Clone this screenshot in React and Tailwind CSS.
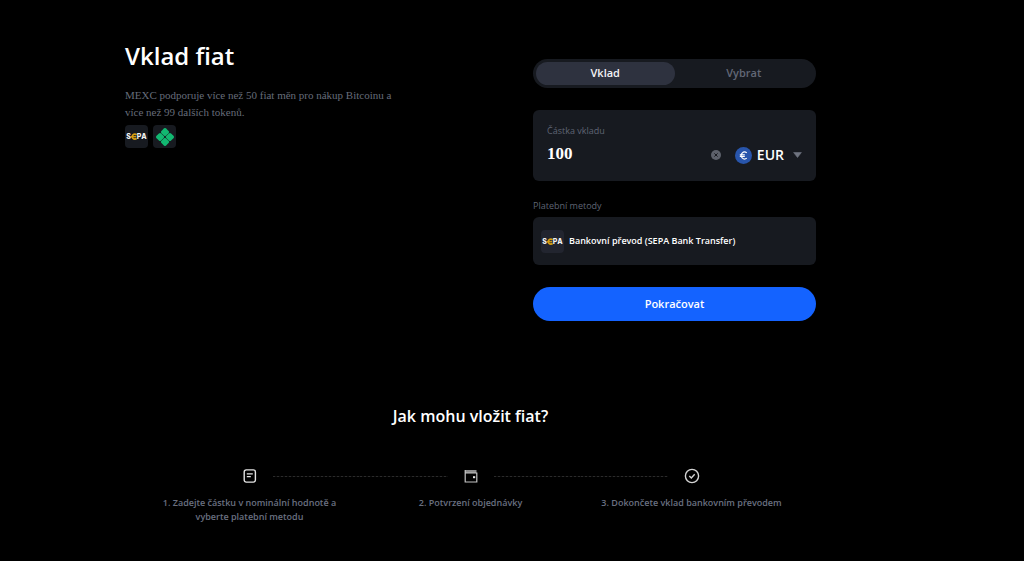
import { useState } from 'react'

const steps = [
  { icon: ListIcon, text: '1. Zadejte částku v nominální hodnotě a vyberte platební metodu' },
  { icon: WalletIcon, text: '2. Potvrzení objednávky' },
  { icon: CheckIcon, text: '3. Dokončete vklad bankovním převodem' },
]

function ListIcon() {
  return (
    <svg width="14" height="16" viewBox="0 0 14 16" fill="none" stroke="#e4e4e4" strokeWidth="1.4">
      <rect x="1.2" y="1.9" width="11.2" height="12.2" rx="2" />
      <path d="M3.8 5.9h6M3.8 8.6h4" />
    </svg>
  )
}

function WalletIcon() {
  return (
    <svg width="14" height="16" viewBox="0 0 14 16" fill="none">
      <path d="M1 2h11.5v3H1z" fill="#8b8b8b" />
      <path d="M1.2 2v12h11.6V5H1.2" stroke="#c4c4c4" strokeWidth="1.2" />
      <path d="M9 8.2h2.2v2H9z" fill="#e4e4e4" />
    </svg>
  )
}

function CheckIcon() {
  return (
    <svg width="16" height="16" viewBox="0 0 16 16" fill="none" stroke="#d4d4d4" strokeWidth="1.4">
      <circle cx="8" cy="8" r="6.6" />
      <path d="M5.3 8l2 2 3.4-3.8" />
    </svg>
  )
}

function SepaLogo({ className }) {
  return (
    <span className={`flex size-[23px] shrink-0 items-center justify-center rounded ${className}`}>
      <svg width="21" height="9" viewBox="0 0 21 9" role="img" aria-label="SEPA">
        <g fontFamily="Inter, sans-serif" fontWeight="800" fontSize="7" fill="#f1f1f1">
          <text x="0.3" y="7.2">S</text>
          <text x="10.8" y="7.2">P</text>
          <text x="15.2" y="7.2">A</text>
        </g>
        <path d="M10.6 2.9A2.5 2.5 0 1 0 10.6 6.4" fill="none" stroke="#d9a010" strokeWidth="1.7" />
        <path d="M5 4.7h5.2" stroke="#d9a010" strokeWidth="1.3" />
      </svg>
    </span>
  )
}

function PixLogo() {
  return (
    <span className="flex size-[23px] shrink-0 items-center justify-center rounded bg-[#171a20]">
      <svg width="18" height="18" viewBox="0 0 18 18">
        <g fill="#12b871" transform="rotate(45 9 9)">
          <rect x="2.2" y="2.2" width="6.6" height="6.6" rx="1.6" />
          <rect x="9.2" y="2.2" width="6.6" height="6.6" rx="1.6" />
          <rect x="2.2" y="9.2" width="6.6" height="6.6" rx="1.6" />
          <rect x="9.2" y="9.2" width="6.6" height="6.6" rx="1.6" />
        </g>
      </svg>
    </span>
  )
}

function Dashes({ visible }) {
  return (
    <span
      className={`h-px flex-1 ${visible ? 'bg-[repeating-linear-gradient(90deg,#2b2b2b_0_2px,#0c0c0c_2px_4px)]' : ''}`}
    />
  )
}

export default function App() {
  const [tab, setTab] = useState('vklad')
  const [amount, setAmount] = useState('100')

  const tabClass = (name) =>
    `h-[23px] flex-1 rounded-full text-[11px] font-semibold ${tab === name ? 'bg-[#2e323f] text-[#f3f4f6]' : 'text-[#626776]'}`

  return (
    <main className="min-h-screen bg-black pr-[208px] pl-[125px] font-['Open_Sans','Noto_Sans',sans-serif] text-white">
      <div className="flex items-start justify-between">
        <section className="w-[283px] pt-[38px]">
          <h1 className="text-2xl leading-9 font-semibold">Vklad fiat</h1>
          <p className="mt-[13px] font-['Liberation_Serif',serif] text-[11px] leading-[17px] text-[#666c7a]">
            MEXC podporuje více než 50 fiat měn pro nákup Bitcoinu a více než 99 dalších tokenů.
          </p>
          <div className="mt-1 flex gap-[5px]">
            <SepaLogo className="bg-[#171a20]" />
            <PixLogo />
          </div>
        </section>

        <form className="w-[283px] pt-[59px]" onSubmit={(e) => e.preventDefault()}>
          <div className="flex items-center rounded-full bg-[#171a20] p-[3px]">
            <button type="button" className={tabClass('vklad')} onClick={() => setTab('vklad')}>
              Vklad
            </button>
            <button type="button" className={tabClass('vybrat')} onClick={() => setTab('vybrat')}>
              Vybrat
            </button>
          </div>

          <div className="mt-[22px] rounded-md bg-[#171a20] px-[14px] pt-[13px] pb-3">
            <label htmlFor="amount" className="block text-[9px] leading-4 text-[#5f6473]">
              Částka vkladu
            </label>
            <div className="mt-[2px] flex items-center">
              <input
                id="amount"
                value={amount}
                onChange={(e) => setAmount(e.target.value)}
                className="h-7 w-0 flex-1 bg-transparent pb-[3px] font-['Liberation_Serif',serif] text-[17px] font-bold outline-none"
              />
              <button type="button" aria-label="Vymazat" onClick={() => setAmount('')}>
                <svg width="10" height="10" viewBox="0 0 10 10">
                  <circle cx="5" cy="5" r="5" fill="#5d616b" />
                  <path d="M3.4 3.4l3.2 3.2M6.6 3.4L3.4 6.6" stroke="#181a20" strokeWidth="1" />
                </svg>
              </button>
              <button type="button" className="ml-[14px] flex items-center">
                <svg width="17" height="17" viewBox="0 0 17 17" fill="none">
                  <circle cx="8.5" cy="8.5" r="8.5" fill="#2855ab" />
                  <path d="M11.8 5.9A3.4 3.4 0 1 0 11.8 11.1M4.8 7.7h5M4.8 9.4h5" stroke="#fff" strokeWidth="1.1" />
                </svg>
                <span className="ml-[5px] text-sm leading-5 font-semibold">EUR</span>
                <svg className="ml-[9px]" width="9" height="6" viewBox="0 0 9 6">
                  <path d="M0.6 0.5h7.8L4.5 5.5z" fill="#6f7480" stroke="#6f7480" strokeWidth="0.6" strokeLinejoin="round" />
                </svg>
              </button>
            </div>
          </div>

          <h2 className="mt-[17px] text-[9px] leading-4 text-[#5f6473]">Platební metody</h2>
          <button type="button" className="mt-[3px] flex h-12 w-full items-center gap-[5px] rounded-md bg-[#171a20] px-2">
            <SepaLogo className="bg-[#22252f]" />
            <span className="text-[9px] font-semibold">Bankovní převod (SEPA Bank Transfer)</span>
          </button>

          <button type="submit" className="mt-[22px] h-[34px] w-full rounded-full bg-[#1463ff] text-[11px] font-semibold">
            Pokračovat
          </button>
        </form>
      </div>

      <section className="mt-[83px] px-[14px]">
        <h2 className="text-center text-base leading-6 font-semibold">Jak mohu vložit fiat?</h2>
        <ol className="mt-10 grid grid-cols-3">
          {steps.map(({ icon: Icon, text }, i) => (
            <li key={text}>
              <div className="flex items-center gap-4">
                <Dashes visible={i > 0} />
                <Icon />
                <Dashes visible={i < steps.length - 1} />
              </div>
              <p className="mt-3 px-4 text-center text-[9px] leading-[14px] font-semibold text-[#6a7080]">{text}</p>
            </li>
          ))}
        </ol>
      </section>
    </main>
  )
}
